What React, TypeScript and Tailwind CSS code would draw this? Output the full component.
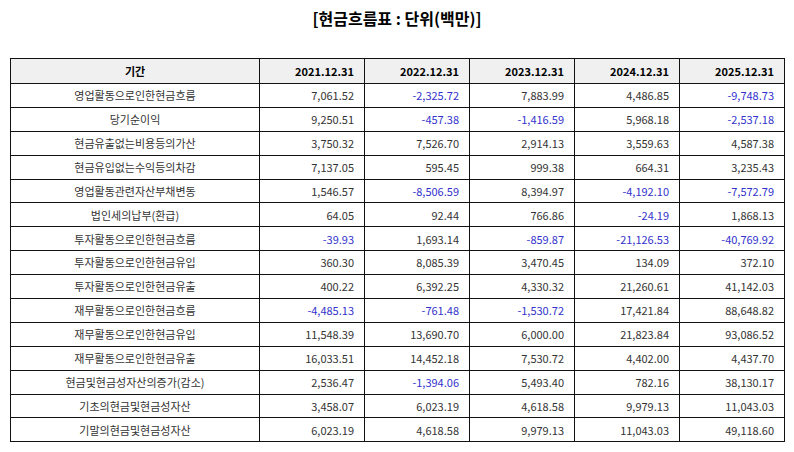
const rows: [string, string[]][] = [
  ['영업활동으로인한현금흐름', ['7,061.52', '-2,325.72', '7,883.99', '4,486.85', '-9,748.73']],
  ['당기순이익', ['9,250.51', '-457.38', '-1,416.59', '5,968.18', '-2,537.18']],
  ['현금유출없는비용등의가산', ['3,750.32', '7,526.70', '2,914.13', '3,559.63', '4,587.38']],
  ['현금유입없는수익등의차감', ['7,137.05', '595.45', '999.38', '664.31', '3,235.43']],
  ['영업활동관련자산부채변동', ['1,546.57', '-8,506.59', '8,394.97', '-4,192.10', '-7,572.79']],
  ['법인세의납부(환급)', ['64.05', '92.44', '766.86', '-24.19', '1,868.13']],
  ['투자활동으로인한현금흐름', ['-39.93', '1,693.14', '-859.87', '-21,126.53', '-40,769.92']],
  ['투자활동으로인한현금유입', ['360.30', '8,085.39', '3,470.45', '134.09', '372.10']],
  ['투자활동으로인한현금유출', ['400.22', '6,392.25', '4,330.32', '21,260.61', '41,142.03']],
  ['재무활동으로인한현금흐름', ['-4,485.13', '-761.48', '-1,530.72', '17,421.84', '88,648.82']],
  ['재무활동으로인한현금유입', ['11,548.39', '13,690.70', '6,000.00', '21,823.84', '93,086.52']],
  ['재무활동으로인한현금유출', ['16,033.51', '14,452.18', '7,530.72', '4,402.00', '4,437.70']],
  ['현금및현금성자산의증가(감소)', ['2,536.47', '-1,394.06', '5,493.40', '782.16', '38,130.17']],
  ['기초의현금및현금성자산', ['3,458.07', '6,023.19', '4,618.58', '9,979.13', '11,043.03']],
  ['기말의현금및현금성자산', ['6,023.19', '4,618.58', '9,979.13', '11,043.03', '49,118.60']],
];

const years = ['2021.12.31', '2022.12.31', '2023.12.31', '2024.12.31', '2025.12.31'];

export default function App() {
  return (
    <div className="w-[794px] h-[452px] bg-white text-[#222] font-['Noto_Sans_CJK_KR',sans-serif]">
      <h1 className="pt-[6px] h-[58px] text-center text-[16px] font-bold text-black leading-[24px]">
        [현금흐름표 : 단위(백만)]
      </h1>
      <table className="ml-[10px] w-[775px] border-collapse table-fixed text-[11px]">
        <colgroup>
          <col className="w-[249px]" />
          {years.map(y => (
            <col key={y} className="w-[105px]" />
          ))}
        </colgroup>
        <thead>
          <tr className="h-[25px] bg-[#f0f0f0]">
            <th className="border border-[#111] font-bold text-center text-black">기간</th>
            {years.map(y => (
              <th key={y} className="border border-[#111] font-bold text-right pr-[10px] text-black">
                {y}
              </th>
            ))}
          </tr>
        </thead>
        <tbody>
          {rows.map(([label, vals]) => (
            <tr key={label} className="h-[23.9px]">
              <td className="border border-[#111] text-center text-[#333]">{label}</td>
              {vals.map((v, i) => (
                <td
                  key={i}
                  className={`border border-[#111] text-right pr-[10px] ${v.startsWith('-') ? 'text-[#3232cc]' : 'text-[#333]'}`}
                >
                  {v}
                </td>
              ))}
            </tr>
          ))}
        </tbody>
      </table>
    </div>
  );
}
